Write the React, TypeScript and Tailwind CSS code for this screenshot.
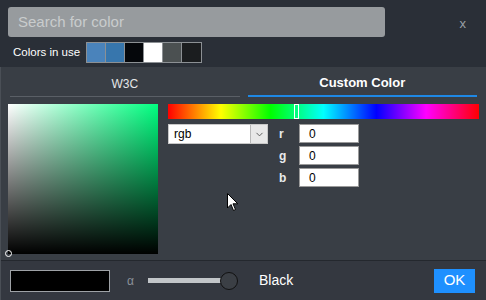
import React, { useState } from "react";
import { ChevronDown } from "lucide-react";

const swatches = ["#4a83bb", "#3776ad", "#05070b", "#ffffff", "#4b5051", "#1b1d1f"];

const App = () => {
  const [rgb] = useState({ r: "0", g: "0", b: "0" });

  return (
    <div
      className="w-[486px] h-[300px] flex flex-col bg-[#2a2f37] overflow-hidden relative"
      style={{ fontFamily: '"Liberation Sans", Arial, sans-serif' }}
    >
      {/* Header: search + colors in use */}
      <div className="h-[67px] shrink-0 pl-2 pr-4 pt-[7px]">
        <div className="flex items-center">
          <div className="w-[377px] h-[30px] rounded-[3px] bg-[#979b9e] flex items-center pl-[10px] text-[15px] text-[#c9cccd]">
            Search for color
          </div>
          <div className="flex-1 text-right text-[13px] text-[#9aa0a6] pt-[4px] pr-[4px]">x</div>
        </div>
        <div className="flex items-center mt-[5px] pl-[5px] gap-[6px]">
          <span className="text-[11.5px] text-white">Colors in use</span>
          <div className="flex border border-[#8c9094]">
            {swatches.map((c, i) => (
              <div
                key={i}
                className="w-[19px] h-[19px] border-r border-[#8c9094] last:border-r-0"
                style={{ backgroundColor: c }}
              />
            ))}
          </div>
        </div>
      </div>

      {/* Main panel */}
      <div className="flex-1 flex flex-col bg-[#393e45] border-l border-[#4a4f56]">
        {/* Tabs */}
        <div className="h-[30px] flex px-[9px] gap-2">
          <div className="w-[230px] flex items-center justify-center pt-[4px] text-[12px] text-[#e4e6e8] border-b border-[#5a5f66]">
            W3C
          </div>
          <div className="w-[230px] flex items-center justify-center pt-[4px] text-[13px] font-bold text-white border-b-2 border-[#1e88e5]">
            Custom Color
          </div>
        </div>

        {/* Picker body */}
        <div className="flex pl-[7px] pt-[7px] gap-[10px] h-[163px]">
          <div className="relative w-[150px] h-[150px] bg-[linear-gradient(to_top,#000,transparent),linear-gradient(to_right,#fff,#00ff80)]">
            <div className="absolute left-[-3px] bottom-[-3px] w-[7px] h-[7px] rounded-full border border-white" />
          </div>

          <div className="flex flex-col">
            <div className="relative w-[311px] h-[15px] bg-[linear-gradient(to_right,#ff0000,#ffff00_17%,#00ff00_33%,#00ffff_50%,#0000ff_67%,#ff00ff_83%,#ff0000)]">
              <div className="absolute left-[126px] top-0 w-[5px] h-[15px] border border-white" />
            </div>

            <div className="flex mt-[5px]">
              <div className="w-[100px] h-[20px] bg-white flex items-center border border-[#c8c8c8]">
                <span className="flex-1 pl-[5px] text-[12px] text-black">rgb</span>
                <div className="w-[17px] h-[18px] bg-[#e8e8e8] border-l border-[#b8b8b8] flex items-center justify-center">
                  <ChevronDown size={11} className="text-[#555]" />
                </div>
              </div>

              <div className="flex flex-col gap-[3px] ml-[11px]">
                {(["r", "g", "b"] as const).map((k) => (
                  <div key={k} className="flex items-center">
                    <span className="w-[20px] text-[12px] font-bold text-[#e8eaec]">{k}</span>
                    <div className="w-[60px] h-[19px] bg-white border border-[#9a9a9a] flex items-center pl-[9px] text-[12px] text-black">
                      {rgb[k]}
                    </div>
                  </div>
                ))}
              </div>
            </div>
          </div>
        </div>

        {/* Footer */}
        <div className="flex-1 flex items-center border-t border-[#24282e] bg-[#343840] pl-[9px] pr-[11px]">
          <div className="w-[100px] h-[22px] bg-black border border-[#9ea2a6]" />
          <span className="ml-[17px] text-[12px] text-[#8a9098]">α</span>
          <div className="ml-[14px] relative w-[90px] h-[20px] flex items-center">
            <div className="w-[80px] h-[5px] bg-[#c2c6c9]" />
            <div className="absolute left-[72px] top-[1px] w-[18px] h-[18px] rounded-full bg-[#3b3f45] border border-[#111]" />
          </div>
          <span className="ml-[21px] text-[14px] text-white">Black</span>
          <div className="ml-auto w-[41px] h-[24px] bg-[#1e90ff] flex items-center justify-center text-[15px] text-white">
            OK
          </div>
        </div>
      </div>

      {/* Mouse pointer */}
      <svg className="absolute left-[227px] top-[193px]" width="12" height="19" viewBox="0 0 12 19">
        <path d="M0.5 0.5 L0.5 15 L4 11.5 L6.5 17.5 L8.5 16.5 L6 10.8 L10.8 10.8 Z" fill="#fff" stroke="#000" strokeWidth="1" />
      </svg>
    </div>
  );
};

export default App;
